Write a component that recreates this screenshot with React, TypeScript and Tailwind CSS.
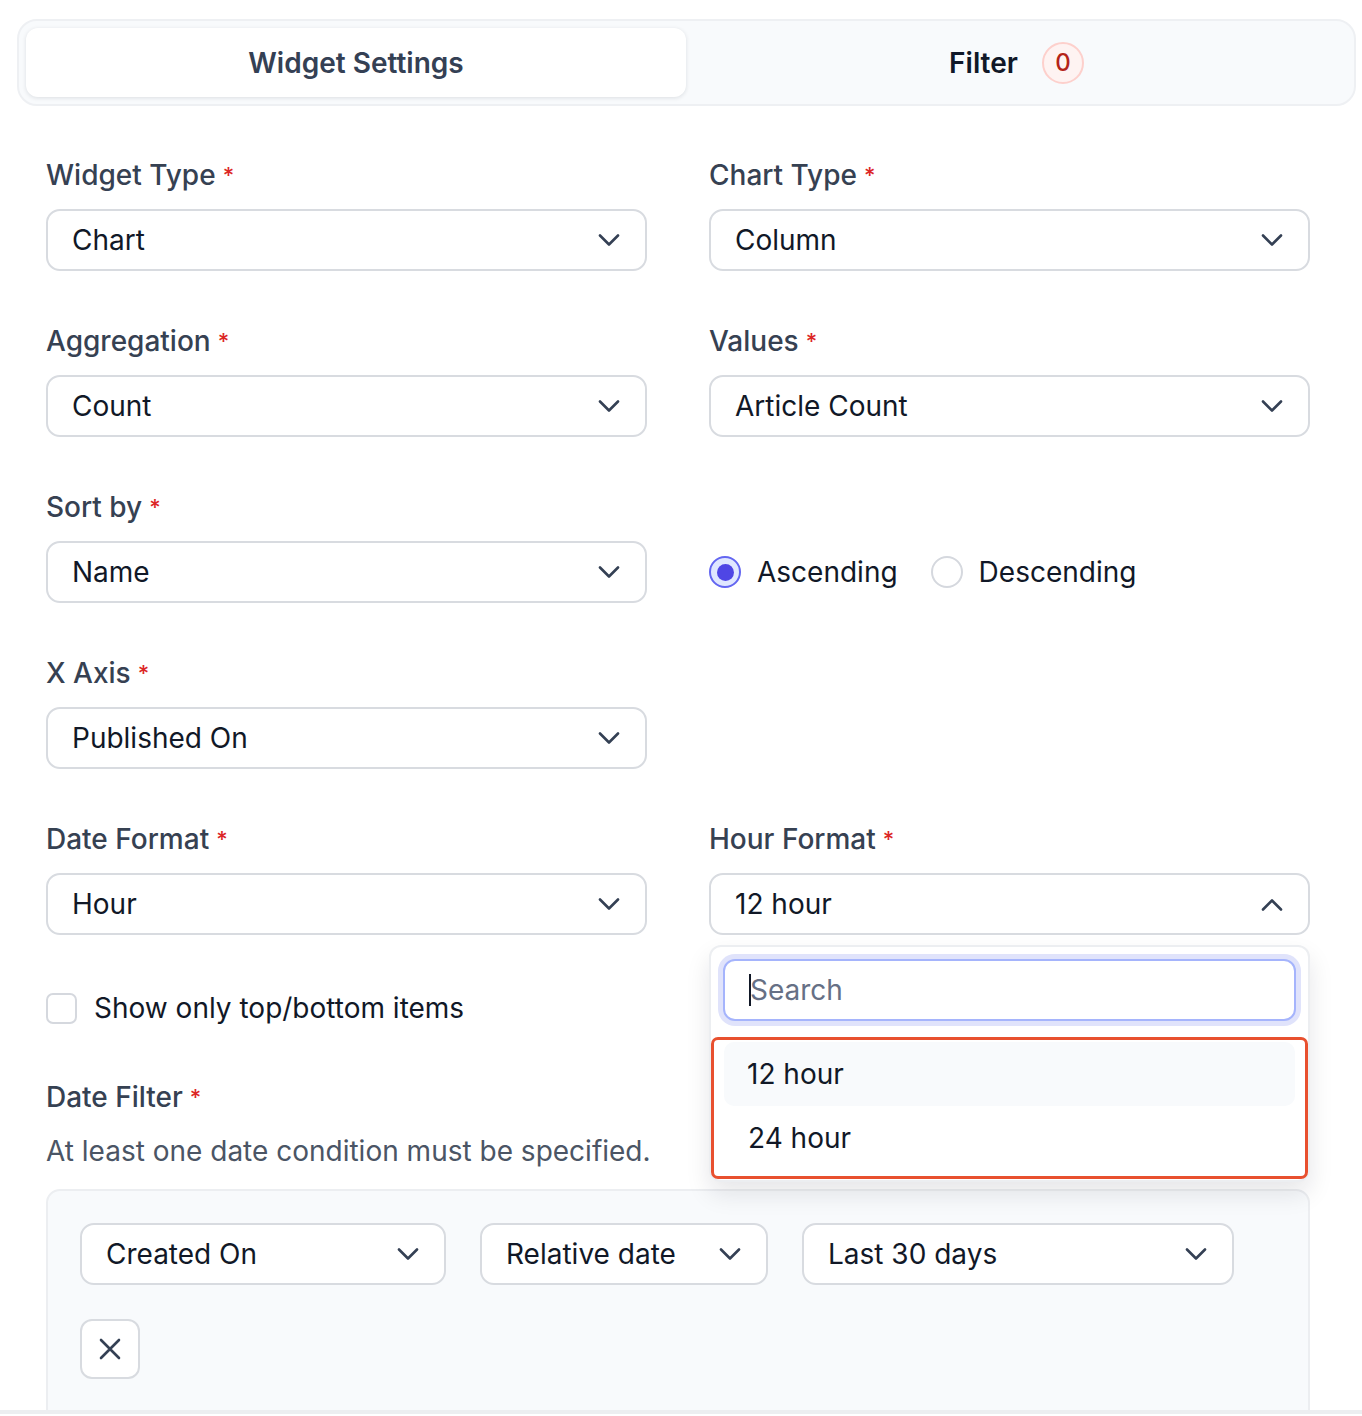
import { ReactNode } from "react"

const font = { fontFamily: "Inter, 'Noto Sans', sans-serif" }

const Chevron = ({ up = false }: { up?: boolean }) => (
  <svg width="22" height="13" viewBox="0 0 22 13" fill="none" className="shrink-0">
    <path
      d={up ? "M2 11.5L11 2.5L20 11.5" : "M2 1.5L11 10.5L20 1.5"}
      stroke="#344054"
      strokeWidth="2.6"
      strokeLinecap="round"
      strokeLinejoin="round"
    />
  </svg>
)

const Label = ({ children }: { children: ReactNode }) => (
  <div className="flex h-[34px] items-center gap-[7px] text-[28px] font-medium text-[#364152]">
    <span>{children}</span>
    <span className="text-[22px] text-[#dc2626]">*</span>
  </div>
)

const Select = ({ value, up = false, className = "" }: { value: string; up?: boolean; className?: string }) => (
  <div
    className={`
      flex
      h-[62px]
      items-center
      justify-between
      rounded-[14px]
      border-2
      border-[#d8dbe0]
      bg-white
      pl-[24px]
      pr-[25px]
      text-[28px]
      text-[#111827]
      ${className}
    `}
  >
    <span>{value}</span>
    <Chevron up={up} />
  </div>
)

const Field = ({ label, value, up = false }: { label: string; value: string; up?: boolean }) => (
  <div className="flex flex-col gap-[17px]">
    <Label>{label}</Label>
    <Select value={value} up={up} />
  </div>
)

const Radio = ({ checked, label }: { checked?: boolean; label: string }) => (
  <div className="flex items-center gap-[16px]">
    {checked ? (
      <span className="flex size-[32px] items-center justify-center rounded-full border-2 border-[#6366f1] bg-[#e0e7ff]">
        <span className="size-[17px] rounded-full bg-[#4f46e5]" />
      </span>
    ) : (
      <span className="size-[32px] rounded-full border-2 border-[#d5d8de] bg-white" />
    )}
    <span className="text-[28px] text-[#111827]">{label}</span>
  </div>
)

export default function App() {
  return (
    <div className="w-[1362px] bg-white" style={font}>
      <div className="h-[1410px] overflow-hidden">
        {/* Tabs */}
        <div
          className="
            ml-[17px]
            mt-[19px]
            flex
            h-[87px]
            w-[1339px]
            rounded-[20px]
            border-2
            border-[#eef0f3]
            bg-[#f8fafc]
            p-[7px]
          "
        >
          <div
            className="
              flex
              w-[660px]
              items-center
              justify-center
              rounded-[12px]
              bg-white
              text-[28px]
              font-semibold
              text-[#344054]
              shadow-[0_1px_4px_rgba(16,24,40,0.12)]
            "
          >
            Widget Settings
          </div>
          <div className="flex flex-1 items-center justify-center gap-[24px] text-[28px] font-semibold text-[#101828]">
            <span>Filter</span>
            <span
              className="
                flex
                size-[42px]
                items-center
                justify-center
                rounded-full
                border-2
                border-[#fdd0cc]
                bg-[#fef3f2]
                text-[24px]
                font-medium
                text-[#b42318]
              "
            >
              0
            </span>
          </div>
        </div>

        {/* Form */}
        <div className="ml-[46px] mt-[52px] w-[1264px]">
          <div className="grid grid-cols-[601px_601px] gap-x-[62px] gap-y-[53px]">
            <Field label="Widget Type" value="Chart" />
            <Field label="Chart Type" value="Column" />
            <Field label="Aggregation" value="Count" />
            <Field label="Values" value="Article Count" />
            <Field label="Sort by" value="Name" />
            <div className="flex flex-col gap-[17px]">
              <div className="h-[34px]" />
              <div className="flex h-[62px] items-center gap-[33px]">
                <Radio checked label="Ascending" />
                <Radio label="Descending" />
              </div>
            </div>
            <Field label="X Axis" value="Published On" />
            <div />
            <Field label="Date Format" value="Hour" />

            {/* Hour format with open menu */}
            <div className="relative flex flex-col gap-[17px]">
              <Label>Hour Format</Label>
              <Select value="12 hour" up />
              <div
                className="
                  absolute
                  left-0
                  top-[123px]
                  z-10
                  w-[601px]
                  rounded-[12px]
                  border-2
                  border-[#eceef1]
                  bg-white
                  px-0
                  pb-[1px]
                  pt-[12px]
                  shadow-[0_12px_24px_rgba(16,24,40,0.10)]
                "
              >
                <div className="px-[12px]">
                  <div
                    className="
                      flex
                      h-[62px]
                      items-center
                      rounded-[12px]
                      border-2
                      border-[#a5b4fc]
                      bg-white
                      pl-[24px]
                      text-[28px]
                      text-[#667085]
                      shadow-[0_0_0_5px_#e0e3fb]
                    "
                  >
                    <span className="mr-[-1px] inline-block h-[32px] w-[2px] bg-[#111827]" />
                    Search
                  </div>
                </div>
                <div className="mt-[16px] rounded-[7px] border-[3px] border-[#e8502f] px-[10px] pb-[6px] pt-[2px]">
                  <div className="flex h-[64px] items-center rounded-[10px] bg-[#f8fafc] pl-[23px] text-[28px] text-[#111827]">
                    12 hour
                  </div>
                  <div className="flex h-[64px] items-center pl-[24px] text-[28px] text-[#111827]">
                    24 hour
                  </div>
                </div>
              </div>
            </div>
          </div>

          {/* Checkbox */}
          <div className="mt-[58px] flex h-[30px] items-center gap-[17px]">
            <span className="size-[31px] rounded-[7px] border-2 border-[#d5d8de] bg-white" />
            <span className="text-[28px] text-[#111827]">Show only top/bottom items</span>
          </div>

          {/* Date filter */}
          <div className="mt-[57px]">
            <Label>Date Filter</Label>
          </div>
          <p className="mt-[20px] h-[34px] text-[28px] leading-[34px] text-[#4b5565]">
            At least one date condition must be specified.
          </p>

          <div
            className="
              mt-[21px]
              h-[260px]
              w-[1264px]
              rounded-[14px]
              border-2
              border-[#eceef1]
              bg-[#f8fafc]
              px-[32px]
              pt-[32px]
            "
          >
            <div className="flex gap-[34px]">
              <Select value="Created On" className="w-[366px]" />
              <Select value="Relative date" className="w-[288px]" />
              <Select value="Last 30 days" className="w-[432px]" />
            </div>
            <button
              className="
                mt-[34px]
                flex
                size-[60px]
                items-center
                justify-center
                rounded-[12px]
                border-2
                border-[#d8dbe0]
                bg-white
              "
              type="button"
            >
              <svg width="22" height="22" viewBox="0 0 22 22" fill="none">
                <path d="M2 2L20 20M20 2L2 20" stroke="#344054" strokeWidth="2.6" strokeLinecap="round" />
              </svg>
            </button>
          </div>
        </div>
      </div>
      <div className="h-[4px] bg-[#eceef0]" />
      <div className="h-[2px] bg-white" />
    </div>
  )
}
